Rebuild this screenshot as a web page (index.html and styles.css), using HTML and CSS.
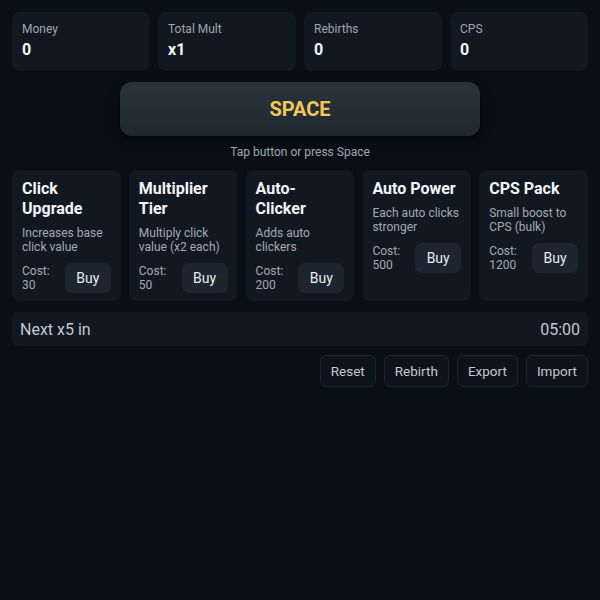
FILE: index.html
```html
<!DOCTYPE html>
<html>
<head>
<meta charset="utf-8">
<link rel="stylesheet" href="styles.css">
</head>
<body>
<div class="app">
  <div class="stats">
    <div class="stat"><div class="stat-label">Money</div><div class="stat-value">0</div></div>
    <div class="stat"><div class="stat-label">Total Mult</div><div class="stat-value">x1</div></div>
    <div class="stat"><div class="stat-label">Rebirths</div><div class="stat-value">0</div></div>
    <div class="stat"><div class="stat-label">CPS</div><div class="stat-value">0</div></div>
  </div>
  <div class="clicker">
    <button class="space-btn">SPACE</button>
    <div class="hint">Tap button or press Space</div>
  </div>
  <div class="upgrades">
    <div class="upgrade">
      <div class="up-title">Click Upgrade</div>
      <div class="up-desc">Increases base click value</div>
      <div class="up-row"><div class="up-cost">Cost:<br>30</div><button class="buy">Buy</button></div>
    </div>
    <div class="upgrade">
      <div class="up-title">Multiplier Tier</div>
      <div class="up-desc">Multiply click value (x2 each)</div>
      <div class="up-row"><div class="up-cost">Cost:<br>50</div><button class="buy">Buy</button></div>
    </div>
    <div class="upgrade">
      <div class="up-title">Auto-<br>Clicker</div>
      <div class="up-desc">Adds auto clickers</div>
      <div class="up-row"><div class="up-cost">Cost:<br>200</div><button class="buy">Buy</button></div>
    </div>
    <div class="upgrade">
      <div class="up-title">Auto Power</div>
      <div class="up-desc">Each auto clicks stronger</div>
      <div class="up-row"><div class="up-cost">Cost:<br>500</div><button class="buy">Buy</button></div>
    </div>
    <div class="upgrade">
      <div class="up-title">CPS Pack</div>
      <div class="up-desc">Small boost to CPS (bulk)</div>
      <div class="up-row"><div class="up-cost">Cost:<br>1200</div><button class="buy">Buy</button></div>
    </div>
  </div>
  <div class="timer">
    <span>Next x5 in</span>
    <span>05:00</span>
  </div>
  <div class="actions">
    <button class="act">Reset</button>
    <button class="act">Rebirth</button>
    <button class="act">Export</button>
    <button class="act">Import</button>
  </div>
</div>
</body>
</html>
```
FILE: styles.css
```css
html, body {
  margin: 0;
  background: #0a0f17;
  font-family: Roboto, "Liberation Sans", sans-serif;
  color: #e8ecf0;
}
.app {
  padding: 12px;
  display: flex;
  flex-direction: column;
}
.stats {
  display: grid;
  grid-template-columns: repeat(4, 1fr);
  gap: 8px;
}
.stat {
  background: #111821;
  border-radius: 8px;
  padding: 9px 10px 10px;
  height: 40px;
}
.stat-label {
  font-size: 12px;
  color: #9ea6b0;
  line-height: 16px;
}
.stat-value {
  font-size: 16px;
  font-weight: 700;
  color: #f3f5f7;
  line-height: 20px;
  margin-top: 3px;
}
.clicker {
  display: flex;
  flex-direction: column;
  align-items: center;
  margin-top: 11px;
}
.space-btn {
  width: 360px;
  height: 54px;
  border: none;
  border-radius: 12px;
  background: linear-gradient(#29343c, #1f282f);
  box-shadow: 0 4px 10px rgba(0,0,0,0.5);
  color: #f4c75c;
  font-family: Roboto, "Liberation Sans", sans-serif;
  font-size: 20px;
  font-weight: 700;
}
.hint {
  margin-top: 9px;
  font-size: 12px;
  color: #9ea6b0;
  line-height: 14px;
}
.upgrades {
  display: grid;
  grid-template-columns: repeat(5, 1fr);
  gap: 8px;
  margin-top: 11px;
}
.upgrade {
  background: #111821;
  border-radius: 8px;
  padding: 9px 10px 10px;
  height: 112px;
}
.up-title {
  font-size: 16px;
  font-weight: 700;
  line-height: 20px;
  color: #f3f5f7;
}
.up-desc {
  margin-top: 7px;
  font-size: 12px;
  line-height: 14px;
  color: #a2aab4;
}
.up-row {
  display: flex;
  align-items: center;
  justify-content: space-between;
  margin-top: 9px;
}
.up-cost {
  font-size: 12px;
  line-height: 14px;
  color: #a2aab4;
}
.buy {
  width: 46px;
  height: 30px;
  border: none;
  border-radius: 7px;
  background: #1c2530;
  color: #e8ecf0;
  font-family: Roboto, "Liberation Sans", sans-serif;
  font-size: 14px;
}
.timer {
  margin-top: 11px;
  background: #111821;
  border-radius: 6px;
  height: 34px;
  padding: 0 8px;
  display: flex;
  align-items: center;
  justify-content: space-between;
  font-size: 16px;
  color: #c3c8ce;
}
.actions {
  display: flex;
  justify-content: flex-end;
  gap: 8px;
  margin-top: 9px;
}
.act {
  height: 32px;
  padding: 0 10px;
  background: #0d131b;
  border: 1px solid #1c242e;
  border-radius: 6px;
  color: #c3c8ce;
  font-family: Roboto, "Liberation Sans", sans-serif;
  font-size: 13.5px;
}
```
